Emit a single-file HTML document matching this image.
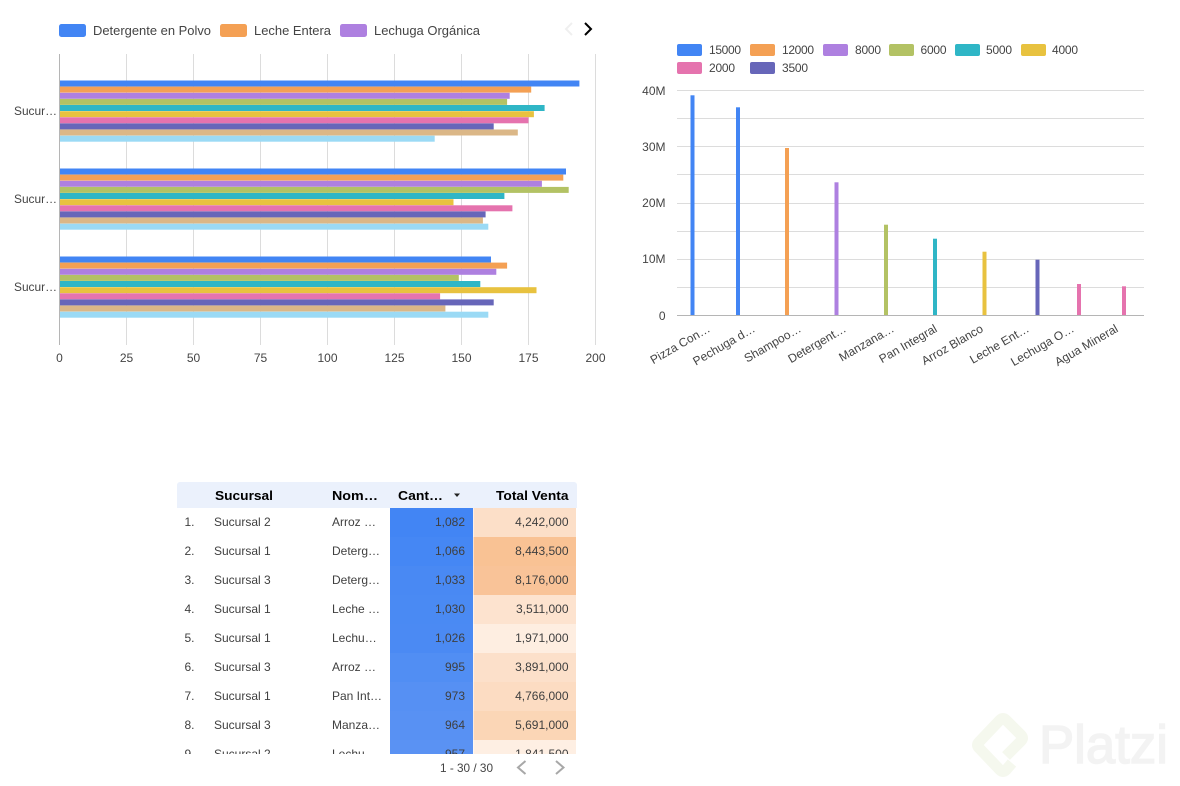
<!DOCTYPE html>
<html lang="es">
<head>
<meta charset="utf-8">
<title>Dashboard</title>
<style>
html,body{margin:0;padding:0;background:#fff;width:1180px;height:786px;overflow:hidden}
svg{display:block}
text{font-family:"Liberation Sans",sans-serif;font-size:12px;fill:#444}
.h{font-weight:bold;font-size:13px;fill:#000}
.c{fill:#3f3f3f}
.m{text-anchor:middle}
.e{text-anchor:end}
.grid{stroke:#dcdcdc;stroke-width:1}
.b1{fill:#4285f4}.b2{fill:#f4a054}.b3{fill:#ae80e0}.b4{fill:#b3c264}.b5{fill:#2fb6c6}
.b6{fill:#e8c23f}.b7{fill:#e573ae}.b8{fill:#6766b9}.b9{fill:#dbb787}.b10{fill:#9bdaf5}
</style>
</head>
<body>
<svg width="1180" height="786" viewBox="0 0 1180 786" xmlns="http://www.w3.org/2000/svg">
<defs><clipPath id="tb"><rect x="177" y="508" width="400" height="246"/></clipPath></defs>

<!-- watermark -->
<path d="M1012 763L1006 770Q1003 773 1000 770L979 748Q976 745 979 742L1000 720Q1003 717 1006 720L1021 735Q1024 738 1021 741L1006 756" fill="none" stroke="#f5f8ee" stroke-width="11"/>
<text x="1039" y="763" style="font-size:54px;fill:#f3f3f3;stroke:#f3f3f3;stroke-width:1.5px" textLength="129" lengthAdjust="spacingAndGlyphs">Platzi</text>

<!-- left legend -->
<rect class="b1" x="59" y="24" width="27" height="13" rx="2.5"/>
<text x="93" y="35" style="font-size:12.5px" textLength="118" lengthAdjust="spacingAndGlyphs">Detergente en Polvo</text>
<rect class="b2" x="220" y="24" width="27" height="13" rx="2.5"/>
<text x="254" y="35" style="font-size:12.5px" textLength="77" lengthAdjust="spacingAndGlyphs">Leche Entera</text>
<rect class="b3" x="340" y="24" width="27" height="13" rx="2.5"/>
<text x="374" y="35" style="font-size:12.5px" textLength="106" lengthAdjust="spacingAndGlyphs">Lechuga Orgánica</text>
<path d="M572 23L566 29L572 35" fill="none" stroke="#efefef" stroke-width="2"/>
<path d="M585 23L591 29L585 35" fill="none" stroke="#000" stroke-width="2"/>

<!-- left grid -->
<g class="grid">
<path d="M126.5 54V345M193.5 54V345M260.5 54V345M327.5 54V345M394.5 54V345M461.5 54V345M528.5 54V345M595.5 54V345" fill="none"/>
</g>

<!-- left bars -->
<rect class="b1" x="59.5" y="80.5" width="519.9" height="6"/>
<rect class="b2" x="59.5" y="86.6" width="471.7" height="6"/>
<rect class="b3" x="59.5" y="92.8" width="450.2" height="6"/>
<rect class="b4" x="59.5" y="98.9" width="447.6" height="6"/>
<rect class="b5" x="59.5" y="105" width="485.1" height="6"/>
<rect class="b6" x="59.5" y="111.2" width="474.4" height="6"/>
<rect class="b7" x="59.5" y="117.3" width="469" height="6"/>
<rect class="b8" x="59.5" y="123.4" width="434.2" height="6"/>
<rect class="b9" x="59.5" y="129.5" width="458.3" height="6"/>
<rect class="b10" x="59.5" y="135.7" width="375.2" height="6"/>

<rect class="b1" x="59.5" y="168.5" width="506.5" height="6"/>
<rect class="b2" x="59.5" y="174.6" width="503.8" height="6"/>
<rect class="b3" x="59.5" y="180.8" width="482.4" height="6"/>
<rect class="b4" x="59.5" y="186.9" width="509.2" height="6"/>
<rect class="b5" x="59.5" y="193" width="444.9" height="6"/>
<rect class="b6" x="59.5" y="199.2" width="394" height="6"/>
<rect class="b7" x="59.5" y="205.3" width="452.9" height="6"/>
<rect class="b8" x="59.5" y="211.4" width="426.1" height="6"/>
<rect class="b9" x="59.5" y="217.5" width="423.4" height="6"/>
<rect class="b10" x="59.5" y="223.7" width="428.8" height="6"/>

<rect class="b1" x="59.5" y="256.5" width="431.5" height="6"/>
<rect class="b2" x="59.5" y="262.6" width="447.6" height="6"/>
<rect class="b3" x="59.5" y="268.8" width="436.8" height="6"/>
<rect class="b4" x="59.5" y="274.9" width="399.3" height="6"/>
<rect class="b5" x="59.5" y="281" width="420.8" height="6"/>
<rect class="b6" x="59.5" y="287.2" width="477" height="6"/>
<rect class="b7" x="59.5" y="293.3" width="380.6" height="6"/>
<rect class="b8" x="59.5" y="299.4" width="434.2" height="6"/>
<rect class="b9" x="59.5" y="305.5" width="385.9" height="6"/>
<rect class="b10" x="59.5" y="311.7" width="428.8" height="6"/>

<path d="M59.5 54V345" stroke="#b5b5b5" stroke-width="1" fill="none"/>

<text x="14" y="115" textLength="43" lengthAdjust="spacingAndGlyphs">Sucur…</text>
<text x="14" y="203" textLength="43" lengthAdjust="spacingAndGlyphs">Sucur…</text>
<text x="14" y="291" textLength="43" lengthAdjust="spacingAndGlyphs">Sucur…</text>

<text class="m" x="59.5" y="362">0</text>
<text class="m" x="126.5" y="362">25</text>
<text class="m" x="193.5" y="362">50</text>
<text class="m" x="260.5" y="362">75</text>
<text class="m" x="327.5" y="362">100</text>
<text class="m" x="394.5" y="362">125</text>
<text class="m" x="461.5" y="362">150</text>
<text class="m" x="528.5" y="362">175</text>
<text class="m" x="595.5" y="362">200</text>

<!-- right legend -->
<rect class="b1" x="677" y="44" width="25" height="12" rx="2"/><text x="709" y="54" textLength="32">15000</text>
<rect class="b2" x="750" y="44" width="25" height="12" rx="2"/><text x="782" y="54" textLength="32">12000</text>
<rect class="b3" x="823" y="44" width="25" height="12" rx="2"/><text x="855" y="54" textLength="26">8000</text>
<rect class="b4" x="889" y="44" width="25" height="12" rx="2"/><text x="920.5" y="54" textLength="26">6000</text>
<rect class="b5" x="955" y="44" width="25" height="12" rx="2"/><text x="986" y="54" textLength="26">5000</text>
<rect class="b6" x="1021" y="44" width="25" height="12" rx="2"/><text x="1052" y="54" textLength="26">4000</text>
<rect class="b7" x="677" y="62" width="25" height="12" rx="2"/><text x="709" y="72" textLength="26">2000</text>
<rect class="b8" x="750" y="62" width="25" height="12" rx="2"/><text x="782" y="72" textLength="26">3500</text>

<!-- right grid -->
<path class="grid" d="M677 90.5H1144M677 118.5H1144M677 146.5H1144M677 174.5H1144M677 203.5H1144M677 231.5H1144M677 259.5H1144M677 287.5H1144" fill="none"/>
<text class="e" x="665.5" y="95">40M</text>
<text class="e" x="665.5" y="151">30M</text>
<text class="e" x="665.5" y="207">20M</text>
<text class="e" x="665.5" y="263">10M</text>
<text class="e" x="665.5" y="320">0</text>

<!-- right bars -->
<rect class="b1" x="690.5" y="95.3" width="4" height="220.2"/>
<rect class="b1" x="736" y="107.3" width="4" height="208.2"/>
<rect class="b2" x="785" y="148" width="4" height="167.5"/>
<rect class="b3" x="834.5" y="182.3" width="4" height="133.2"/>
<rect class="b4" x="884" y="224.7" width="4" height="90.8"/>
<rect class="b5" x="933" y="238.7" width="4" height="76.8"/>
<rect class="b6" x="982.5" y="251.7" width="4" height="63.8"/>
<rect class="b8" x="1035.5" y="259.7" width="4" height="55.8"/>
<rect class="b7" x="1077" y="284" width="4" height="31.5"/>
<rect class="b7" x="1122" y="286.3" width="4" height="29.2"/>
<path d="M677 315.5H1144" stroke="#b5b5b5" stroke-width="1" fill="none"/>

<!-- right x labels -->
<text class="e" transform="translate(711 331) rotate(-30)">Pizza Con…</text>
<text class="e" transform="translate(756 331) rotate(-30)">Pechuga d…</text>
<text class="e" transform="translate(802 331) rotate(-30)">Shampoo…</text>
<text class="e" transform="translate(847 331) rotate(-30)">Detergent…</text>
<text class="e" transform="translate(895 331) rotate(-30)">Manzana…</text>
<text class="e" transform="translate(938 331) rotate(-30)">Pan Integral</text>
<text class="e" transform="translate(984 331) rotate(-30)">Arroz Blanco</text>
<text class="e" transform="translate(1030 331) rotate(-30)">Leche Ent…</text>
<text class="e" transform="translate(1075 331) rotate(-30)">Lechuga O…</text>
<text class="e" transform="translate(1119 331) rotate(-30)">Agua Mineral</text>

<!-- table header -->
<path d="M180 482H574a3 3 0 0 1 3 3V508H177V485a3 3 0 0 1 3-3Z" fill="#ebf1fc"/>
<text class="h" x="215" y="500" textLength="58" lengthAdjust="spacingAndGlyphs">Sucursal</text>
<text class="h" x="332" y="500" textLength="46" lengthAdjust="spacingAndGlyphs">Nom…</text>
<text class="h" x="398" y="500" textLength="45" lengthAdjust="spacingAndGlyphs">Cant…</text>
<path d="M454 493.5H460L457 497Z" fill="#222"/>
<text class="h" x="496" y="500" textLength="72.500" lengthAdjust="spacingAndGlyphs">Total Venta</text>

<!-- table body -->
<g clip-path="url(#tb)">
<rect x="390" y="508" width="83" height="29" fill="#4285f4"/>
<rect x="390" y="537" width="83" height="29" fill="#4587f4"/>
<rect x="390" y="566" width="83" height="29" fill="#4989f3"/>
<rect x="390" y="595" width="83" height="29" fill="#4a8af3"/>
<rect x="390" y="624" width="83" height="29" fill="#4b8af3"/>
<rect x="390" y="653" width="83" height="29" fill="#518ef3"/>
<rect x="390" y="682" width="83" height="29" fill="#5690f3"/>
<rect x="390" y="711" width="83" height="29" fill="#5891f3"/>
<rect x="390" y="740" width="83" height="29" fill="#5a92f3"/>

<rect x="473.500" y="508" width="102.500" height="29" fill="#fcdfc8"/>
<rect x="473.500" y="537" width="102.500" height="29" fill="#f9c294"/>
<rect x="473.500" y="566" width="102.500" height="29" fill="#f9c398"/>
<rect x="473.500" y="595" width="102.500" height="29" fill="#fde3cf"/>
<rect x="473.500" y="624" width="102.500" height="29" fill="#feeee1"/>
<rect x="473.500" y="653" width="102.500" height="29" fill="#fce0ca"/>
<rect x="473.500" y="682" width="102.500" height="29" fill="#fcdcc2"/>
<rect x="473.500" y="711" width="102.500" height="29" fill="#fbd6b6"/>
<rect x="473.500" y="740" width="102.500" height="29" fill="#feefe3"/>

<text x="184.500" y="526" class="c">1.</text><text x="214" y="526" class="c">Sucursal 2</text><text x="332" y="526" class="c">Arroz …</text><text x="465" y="526" class="c e">1,082</text><text x="568.500" y="526" class="c e">4,242,000</text>
<text x="184.500" y="555" class="c">2.</text><text x="214" y="555" class="c">Sucursal 1</text><text x="332" y="555" class="c">Deterg…</text><text x="465" y="555" class="c e">1,066</text><text x="568.500" y="555" class="c e">8,443,500</text>
<text x="184.500" y="584" class="c">3.</text><text x="214" y="584" class="c">Sucursal 3</text><text x="332" y="584" class="c">Deterg…</text><text x="465" y="584" class="c e">1,033</text><text x="568.500" y="584" class="c e">8,176,000</text>
<text x="184.500" y="613" class="c">4.</text><text x="214" y="613" class="c">Sucursal 1</text><text x="332" y="613" class="c">Leche …</text><text x="465" y="613" class="c e">1,030</text><text x="568.500" y="613" class="c e">3,511,000</text>
<text x="184.500" y="642" class="c">5.</text><text x="214" y="642" class="c">Sucursal 1</text><text x="332" y="642" class="c">Lechu…</text><text x="465" y="642" class="c e">1,026</text><text x="568.500" y="642" class="c e">1,971,000</text>
<text x="184.500" y="671" class="c">6.</text><text x="214" y="671" class="c">Sucursal 3</text><text x="332" y="671" class="c">Arroz …</text><text x="465" y="671" class="c e">995</text><text x="568.500" y="671" class="c e">3,891,000</text>
<text x="184.500" y="700" class="c">7.</text><text x="214" y="700" class="c">Sucursal 1</text><text x="332" y="700" class="c">Pan Int…</text><text x="465" y="700" class="c e">973</text><text x="568.500" y="700" class="c e">4,766,000</text>
<text x="184.500" y="729" class="c">8.</text><text x="214" y="729" class="c">Sucursal 3</text><text x="332" y="729" class="c">Manza…</text><text x="465" y="729" class="c e">964</text><text x="568.500" y="729" class="c e">5,691,000</text>
<text x="184.500" y="758" class="c">9.</text><text x="214" y="758" class="c">Sucursal 2</text><text x="332" y="758" class="c">Lechu…</text><text x="465" y="758" class="c e">957</text><text x="568.500" y="758" class="c e">1,841,500</text>
</g>

<!-- pagination -->
<text x="440" y="772" textLength="53" lengthAdjust="spacingAndGlyphs">1 - 30 / 30</text>
<path d="M525.500 761L518 767.500L525.500 774" fill="none" stroke="#a8a8a8" stroke-width="2"/>
<path d="M556 761L563.500 767.500L556 774" fill="none" stroke="#a8a8a8" stroke-width="2"/>
</svg>
</body>
</html>
